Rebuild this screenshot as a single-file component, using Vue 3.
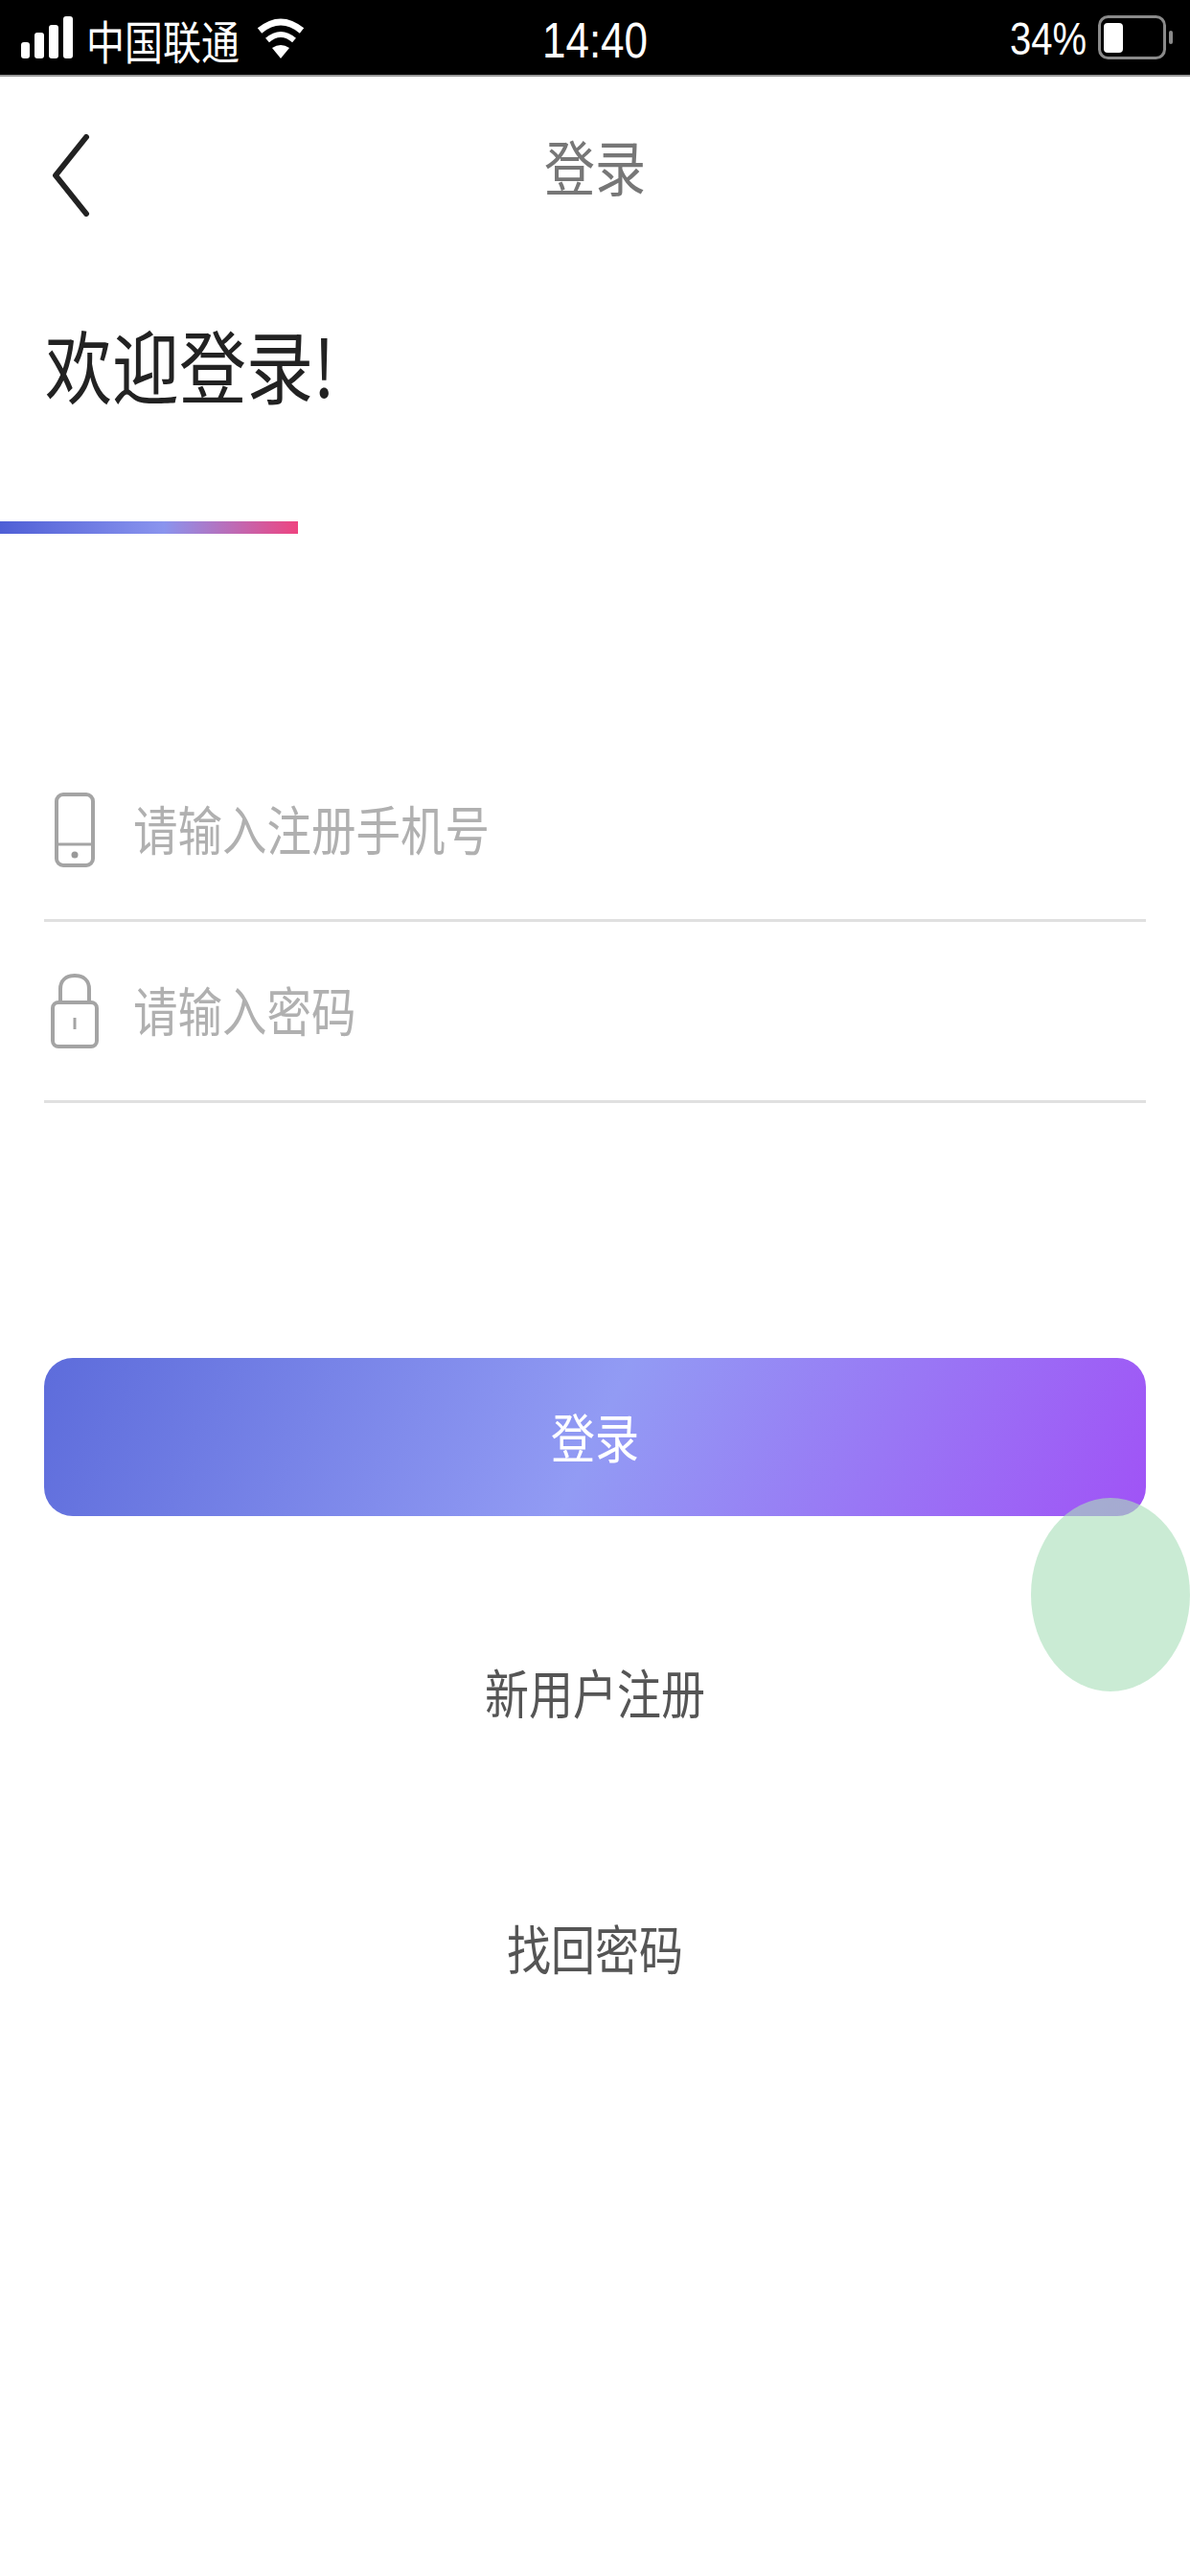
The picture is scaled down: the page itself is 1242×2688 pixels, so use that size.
<script setup>
const links = ['新用户注册', '找回密码'];
</script>

<template>
  <div class="page">
    <div class="status">
      <div class="status-left">
        <svg width="54" height="44" viewBox="0 0 54 44" fill="#fff">
          <rect x="0" y="27" width="9" height="17" rx="3" />
          <rect x="14" y="17" width="10" height="27" rx="3" />
          <rect x="29" y="9" width="10" height="35" rx="3" />
          <rect x="44" y="0" width="10" height="44" rx="3" />
        </svg>
        <span class="carrier status-text tall">中国联通</span>
        <svg width="50" height="44" viewBox="0 0 50 44" fill="none" stroke="#fff">
          <path d="M3 15Q25 -3 47 15" stroke-width="7" />
          <path d="M11 25Q25 13 39 25" stroke-width="6" />
          <path d="M16 33Q25 27 34 33L25 44Z" fill="#fff" stroke="none" />
        </svg>
      </div>
      <span class="time status-text tall">14:40</span>
      <div class="status-right">
        <span class="status-text tall">34%</span>
        <svg width="78" height="46" viewBox="0 0 78 46">
          <rect x="1.5" y="1.5" width="68" height="43" rx="9" fill="none" stroke="#8a8a8a" stroke-width="3" />
          <rect x="6" y="8" width="20" height="31" rx="4" fill="#fff" />
          <rect x="74" y="16" width="4" height="14" rx="2" fill="#8a8a8a" />
        </svg>
      </div>
    </div>

    <div class="nav">
      <svg class="back" width="40" height="86" viewBox="0 0 40 86" fill="none" stroke="#222" stroke-width="6" stroke-linecap="round" stroke-linejoin="round">
        <path d="M36 3L4 43L36 83" />
      </svg>
      <span class="nav-title tall">登录</span>
    </div>

    <h1 class="welcome"><span class="tall">欢迎登录!</span></h1>
    <div class="accent"></div>

    <div class="form">
      <div class="field">
        <div class="field-icon">
          <svg width="42" height="78" viewBox="0 0 42 78" fill="none" stroke="#a4a4a4" stroke-width="4">
            <rect x="2" y="2" width="38" height="74" rx="7" />
            <path d="M2 54H40" stroke-width="3" />
            <circle cx="21" cy="65" r="3.5" fill="#999" stroke="none" />
          </svg>
        </div>
        <span class="hint tall">请输入注册手机号</span>
      </div>
      <div class="field">
        <div class="field-icon">
          <svg width="50" height="78" viewBox="0 0 50 78" fill="none" stroke="#a4a4a4" stroke-width="4">
            <path d="M10 31V16C10 7 16 2 25 2S40 7 40 16V31" />
            <rect x="2" y="30" width="46" height="46" rx="6" />
            <path d="M25 46V58" stroke-width="3" />
          </svg>
        </div>
        <span class="hint tall">请输入密码</span>
      </div>
    </div>

    <button class="submit"><span class="tall">登录</span></button>

    <div class="links">
      <a v-for="item in links" :key="item" class="link"><span class="tall">{{ item }}</span></a>
    </div>

    <!-- 悬浮的半透明圆 -->
    <div class="float-dot"></div>
  </div>
</template>

<style scoped>
.page {
  position: relative;
  width: 1242px;
  height: 2688px;
  overflow: hidden;
  background: #fff;
  font-family: "Noto Sans CJK SC", "Noto Sans", sans-serif;
}

/* 截图本身被纵向拉伸过 */
.tall {
  display: inline-block;
  transform: scaleY(1.18);
}

.status {
  display: grid;
  grid-template-columns: 1fr auto 1fr;
  align-items: center;
  height: 78px;
  background: #000;
  border-bottom: 2px solid #999;
  color: #fff;
  font-size: 40px;
}

.status-text {
  margin-top: 5px;
}

.status-left {
  display: flex;
  align-items: center;
  padding-left: 22px;
}

.carrier {
  margin: 5px 18px 0 14px;
}

.status-right {
  display: flex;
  align-items: center;
  justify-content: flex-end;
  gap: 12px;
  padding-right: 18px;
  font-family: "Liberation Sans", sans-serif;
}

.time {
  font-family: "Liberation Sans", sans-serif;
  font-size: 44px;
}

.nav {
  display: flex;
  align-items: center;
  justify-content: center;
  position: relative;
  height: 188px;
}

.back {
  position: absolute;
  left: 54px;
  top: 60px;
}

.nav-title {
  font-size: 53px;
  margin-top: -4px;
  color: #777;
}

.welcome {
  margin: 60px 0 0;
  padding-left: 47px;
  font-size: 70px;
  font-weight: 400;
  line-height: 103px;
  color: #222;
}

.accent {
  width: 311px;
  height: 13px;
  margin-top: 113px;
  background: linear-gradient(90deg, #4f5fd6, #8a94ee 55%, #ee4480);
}

.form {
  margin: 216px 46px 0;
}

.field {
  display: flex;
  align-items: center;
  gap: 29px;
  height: 186px;
  border-bottom: 3px solid #e0e0e0;
}

.field-icon {
  display: flex;
  justify-content: center;
  width: 64px;
}

.hint {
  margin-top: -8px;
  font-size: 46.5px;
  color: #b0b0b0;
}

.submit {
  display: block;
  width: 1150px;
  height: 165px;
  margin: 266px 46px 0;
  padding: 0 0 6px;
  border: none;
  border-radius: 30px;
  background: linear-gradient(115deg, #5d6cdb, #929bf4 50%, #a053f6);
  color: #fff;
  font-family: inherit;
  font-size: 46px;
}

.links {
  display: flex;
  flex-direction: column;
  align-items: center;
  gap: 207px;
  margin-top: 152px;
}

.link {
  font-size: 46px;
  line-height: 60px;
  color: #555;
}

.float-dot {
  position: absolute;
  left: 1076px;
  top: 1563px;
  width: 166px;
  height: 202px;
  border-radius: 50%;
  background: rgba(170, 222, 185, 0.62);
}
</style>

<style>
body {
  margin: 0;
}
</style>
